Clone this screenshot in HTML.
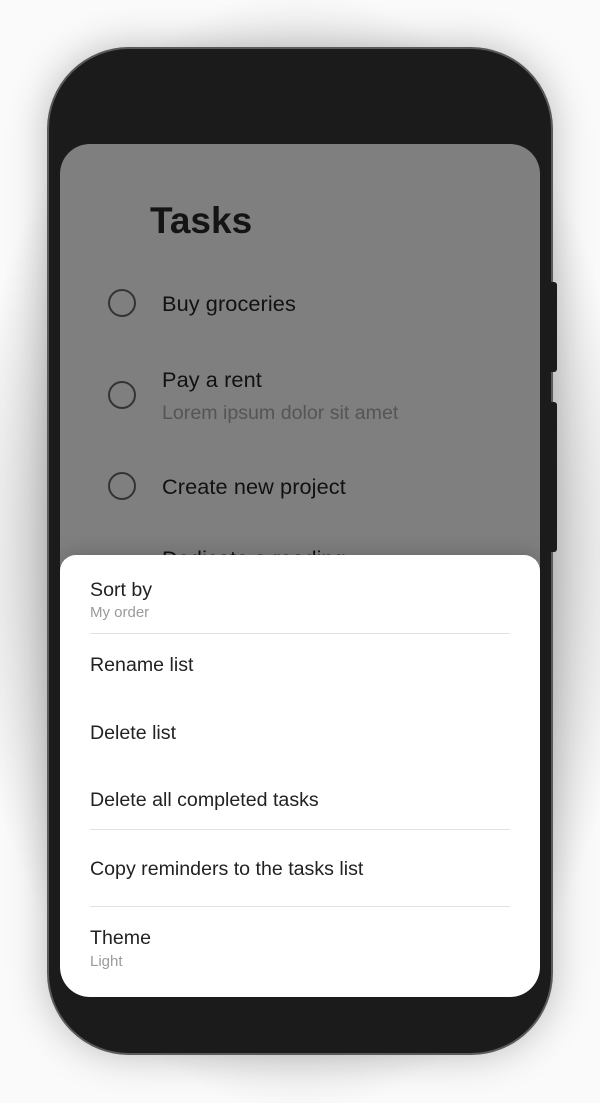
<!DOCTYPE html>
<html><head><meta charset="utf-8"><style>
*{margin:0;padding:0;box-sizing:border-box}
html,body{width:600px;height:1103px;overflow:hidden;background:#fafafa;font-family:"Liberation Sans",Roboto,sans-serif}
.bg{position:absolute;inset:0;background:radial-gradient(ellipse 340px 560px at 300px 551px,#bdbdbd 0%,#d0d0d0 70%,#fafafa 100%)}
.phone{position:absolute;left:47px;top:47px;width:506px;height:1008px;border-radius:82px;background:#1b1b1b;border:2px solid #5a5a5a;box-shadow:0 0 40px rgba(0,0,0,.25)}
.btn{position:absolute;left:551px;width:6px;background:#1b1b1b;border-radius:0 3px 3px 0}
.screen{position:absolute;left:60px;top:144px;width:480px;height:853px;border-radius:30px;background:#7f7f7f;overflow:hidden}
.t{position:absolute;font-size:21.7px;font-weight:500;color:#111;white-space:nowrap;letter-spacing:0.1px}
.c{position:absolute;left:48px;width:28px;height:28px;border:2.5px solid #333;border-radius:50%}
.sheet{position:absolute;left:0;top:411px;width:480px;height:442px;background:#fff;border-radius:16px 16px 30px 30px;box-shadow:0 -6px 16px rgba(0,0,0,.12)}
.i{position:absolute;left:30px;font-size:19.6px;color:#222;white-space:nowrap}
.s{position:absolute;left:30px;font-size:15px;color:#9a9a9a}
.d{position:absolute;left:30px;width:420px;height:1px;background:#e3e3e3}
</style></head><body>
<div class="bg"></div>
<div class="phone"></div>
<div class="btn" style="top:282px;height:90px"></div>
<div class="btn" style="top:402px;height:150px"></div>
<div class="screen">
 <div style="position:absolute;left:90px;top:56px;font-size:37px;font-weight:bold;color:#141414">Tasks</div>
 <div class="c" style="top:145px"></div><div class="t" style="left:102px;top:147px">Buy groceries</div>
 <div class="c" style="top:237px"></div><div class="t" style="left:102px;top:223px">Pay a rent</div>
 <div style="position:absolute;left:102px;top:258px;font-size:19.6px;color:#555">Lorem ipsum dolor sit amet</div>
 <div class="c" style="top:328px"></div><div class="t" style="left:102px;top:330px">Create new project</div>
 <div class="t" style="left:102px;top:402px">Dedicate a reading</div>
 <div class="sheet">
  <div class="i" style="top:24px">Sort by</div>
  <div class="s" style="top:49px">My order</div>
  <div class="d" style="top:78px"></div>
  <div class="i" style="top:99px">Rename list</div>
  <div class="i" style="top:167px">Delete list</div>
  <div class="i" style="top:234px">Delete all completed tasks</div>
  <div class="d" style="top:274px"></div>
  <div class="i" style="top:303px">Copy reminders to the tasks list</div>
  <div class="d" style="top:351px"></div>
  <div class="i" style="top:372px">Theme</div>
  <div class="s" style="top:398px">Light</div>
 </div>
</div>
</body></html>
